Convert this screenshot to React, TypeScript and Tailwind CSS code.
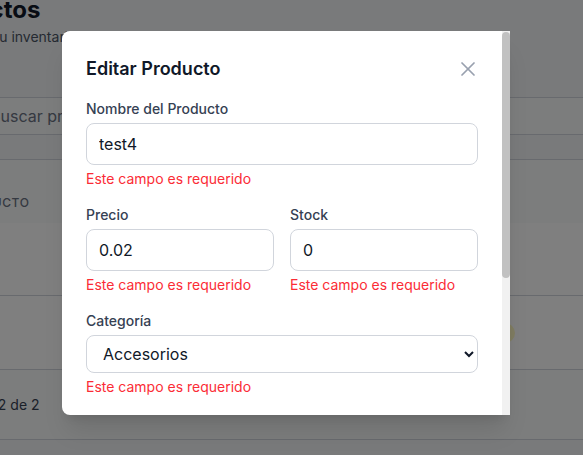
import { X, Search } from "lucide-react";

const badgeRows = [
  { nombre: "test3", spacer: "w-[541px]", badge: "bg-pink-100 text-pink-800", label: "Ropa" },
  { nombre: "test4", spacer: "w-[550px]", badge: "bg-yellow-100 text-yellow-800", label: "Bajo" },
];

function Field({
  label,
  children,
}: {
  label: string;
  children: React.ReactNode;
}) {
  return (
    <div>
      <label className="mb-1 block text-sm font-medium text-gray-700">{label}</label>
      {children}
      <p className="mt-1 text-sm text-red-500">Este campo es requerido</p>
    </div>
  );
}

export default function App() {
  const inputClass =
    "w-full rounded-lg border border-gray-300 px-3 py-2 text-base text-gray-900 outline-none";

  return (
    <div className="relative h-[455px] w-[583px] overflow-hidden bg-gray-100 font-['Inter',sans-serif]">
      {/* pagina de fondo */}
      <div className="-ml-[80px] -mt-[6px] w-[740px]">
        <h1 className="text-2xl font-bold text-gray-900">Productos</h1>
        <p className="mt-px text-sm text-gray-600">Administra tu inventario de productos</p>

        <div className="mt-[34px] py-4 pl-[29px] pr-4">
          <div className="flex h-[38px] items-center rounded-lg border border-gray-300 bg-gray-50 pl-10 text-base text-gray-500">
            <Search className="-ml-7 mr-3 h-4 w-4 text-gray-400" />
            Buscar productos...
          </div>
        </div>

        <div className="mt-2 border-y border-gray-300 bg-gray-50">
          <div className="h-[23px]" />
          <div className="flex h-10 items-center pl-[37px] text-xs font-medium uppercase tracking-wider text-gray-500">
            <span className="w-[200px]">Producto</span>
            <span className="w-[120px]">Precio</span>
            <span className="w-[120px]">Stock</span>
            <span>Categoría</span>
          </div>
          <div className="divide-y divide-gray-300 bg-white">
            {badgeRows.map((row) => (
              <div key={row.nombre} className="flex h-[73px] items-center text-sm text-gray-900">
                <div className={`${row.spacer} pl-[160px]`}>{row.nombre}</div>
                <span className={`rounded-full px-2.5 py-0.5 text-xs font-semibold ${row.badge}`}>
                  {row.label}
                </span>
              </div>
            ))}
          </div>
          <div className="flex h-[70px] items-center border-t border-gray-300 pl-[29px] text-sm text-gray-700">
            Página 2 de 2
          </div>
        </div>
      </div>

      {/* modal */}
      <div className="absolute inset-0 bg-black/50">
        <div className="ml-[62px] mt-[31px] flex h-[384px] w-[448px] overflow-hidden rounded-l-lg bg-white shadow-xl">
          <div className="flex-1 overflow-hidden p-6">
            <div className="mb-4 flex items-center justify-between">
              <h2 className="text-lg font-semibold text-gray-900">Editar Producto</h2>
              <button className="-mr-0.5 text-gray-400">
                <X className="h-6 w-6" strokeWidth={1.75} />
              </button>
            </div>

            <form className="space-y-4">
              <Field label="Nombre del Producto">
                <input className={inputClass} defaultValue="test4" />
              </Field>

              <div className="grid grid-cols-2 gap-4">
                <Field label="Precio">
                  <input className={inputClass} defaultValue="0.02" />
                </Field>
                <Field label="Stock">
                  <input className={inputClass} defaultValue="0" />
                </Field>
              </div>

              <Field label="Categoría">
                <select
                  className="h-[38px] w-full rounded-lg border border-gray-300 bg-white px-3 text-base text-gray-900"
                  defaultValue="Accesorios"
                >
                  <option>Electrónica</option>
                  <option>Ropa</option>
                  <option>Accesorios</option>
                </select>
              </Field>

              <div>
                <label className="mb-1 block text-sm font-medium text-gray-700">Descripción</label>
                <textarea className={inputClass} rows={3} />
              </div>
            </form>
          </div>

          {/* barra de desplazamiento */}
          <div className="w-2 bg-[#f1f1f1]">
            <div className="mt-px h-[246px] rounded bg-[#c1c1c1]" />
          </div>
        </div>
      </div>
    </div>
  );
}
